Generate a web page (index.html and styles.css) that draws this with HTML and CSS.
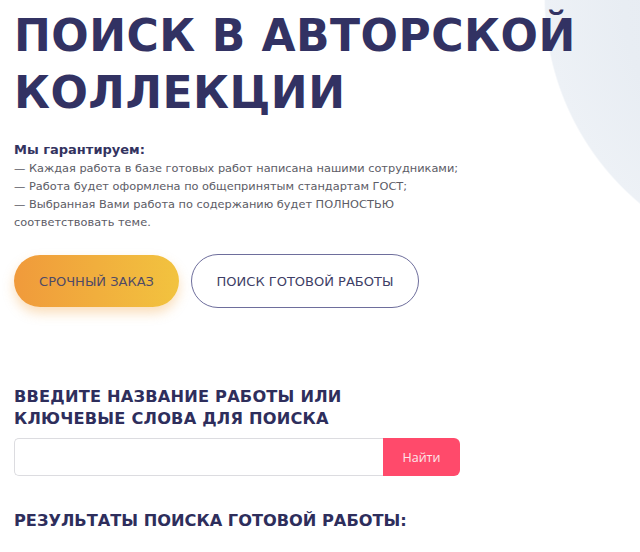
FILE: index.html
```html
<!DOCTYPE html>
<html lang="ru">
<head>
<meta charset="utf-8">
<title>Поиск в авторской коллекции</title>
<link rel="stylesheet" href="styles.css">
</head>
<body>
<main class="page">
  <h1 class="title">ПОИСК В АВТОРСКОЙ<br>КОЛЛЕКЦИИ</h1>
  <div class="guarantee">
    <p class="guarantee-head">Мы гарантируем:</p>
    <p class="guarantee-text">— Каждая работа в базе готовых работ написана нашими сотрудниками;<br>— Работа будет оформлена по общепринятым стандартам ГОСТ;<br>— Выбранная Вами работа по содержанию будет ПОЛНОСТЬЮ<br>соответствовать теме.</p>
  </div>
  <div class="actions">
    <a class="btn btn-urgent" href="#">СРОЧНЫЙ ЗАКАЗ</a>
    <a class="btn btn-outline" href="#">ПОИСК ГОТОВОЙ РАБОТЫ</a>
  </div>
  <h2 class="sub">ВВЕДИТЕ НАЗВАНИЕ РАБОТЫ ИЛИ<br>КЛЮЧЕВЫЕ СЛОВА ДЛЯ ПОИСКА</h2>
  <form class="search">
    <input class="search-input" type="text">
    <button class="search-btn" type="button">Найти</button>
  </form>
  <h2 class="sub results">РЕЗУЛЬТАТЫ ПОИСКА ГОТОВОЙ РАБОТЫ:</h2>
</main>
</body>
</html>
```

FILE: styles.css
```css
html, body {
  margin: 0;
  padding: 0;
}
body {
  width: 640px;
  height: 552px;
  overflow: hidden;
  font-family: "DejaVu Sans", "Liberation Sans", sans-serif;
  color: #33335f;
  background-color: #ffffff;
  background-image: radial-gradient(circle 266px at 810px 0px, #e3e9f0 0%, #e8edf3 70%, #edf1f6 99.4%, rgba(255,255,255,0) 100%);
  background-repeat: no-repeat;
}
.page {
  padding: 7px 0 0 14px;
  display: flex;
  flex-direction: column;
  align-items: flex-start;
}
.title {
  margin: 0;
  font-size: 44px;
  line-height: 57px;
  font-weight: 700;
  color: #323263;
  letter-spacing: 0.5px;
}
.guarantee {
  margin-top: 20px;
}
.guarantee-head {
  margin: 0;
  font-size: 13px;
  line-height: 18px;
  font-weight: 700;
  color: #33335f;
}
.guarantee-text {
  margin: 0;
  font-size: 11.35px;
  line-height: 18px;
  color: #5c5c66;
}
.actions {
  margin-top: 23px;
  display: flex;
  gap: 12px;
  align-items: center;
}
.btn {
  display: flex;
  align-items: center;
  justify-content: center;
  height: 52px;
  border-radius: 27px;
  font-size: 13px;
  color: #4f4a66;
  text-decoration: none;
  box-sizing: border-box;
}
.btn-urgent {
  width: 165px;
  background: linear-gradient(90deg, #f09a3b 0%, #f2c33f 100%);
  box-shadow: 0 6px 12px rgba(240, 160, 60, 0.35);
}
.btn-outline {
  width: 228px;
  height: 54px;
  border: 1px solid #6e6e9c;
  color: #3e3e66;
}
.sub {
  margin: 0;
  font-size: 16.2px;
  line-height: 21.5px;
  font-weight: 700;
  color: #2e2e5c;
  letter-spacing: 0.2px;
}
.actions + .sub {
  margin-top: 78px;
}
.search {
  margin-top: 9px;
  display: flex;
  width: 446px;
  height: 38px;
}
.search-input {
  flex: 1;
  margin: 0;
  border: 1px solid #dcdce0;
  border-right: none;
  border-radius: 5px 0 0 5px;
  box-sizing: border-box;
  height: 100%;
}
.search-btn {
  width: 77px;
  height: 100%;
  margin: 0;
  border: none;
  border-radius: 0 6px 6px 0;
  background: #ff4a6b;
  color: #fde6ea;
  font-family: "Open Sans", "DejaVu Sans", sans-serif;
  font-size: 12.5px;
}
.results {
  margin-top: 34px;
  letter-spacing: 0;
}
```
